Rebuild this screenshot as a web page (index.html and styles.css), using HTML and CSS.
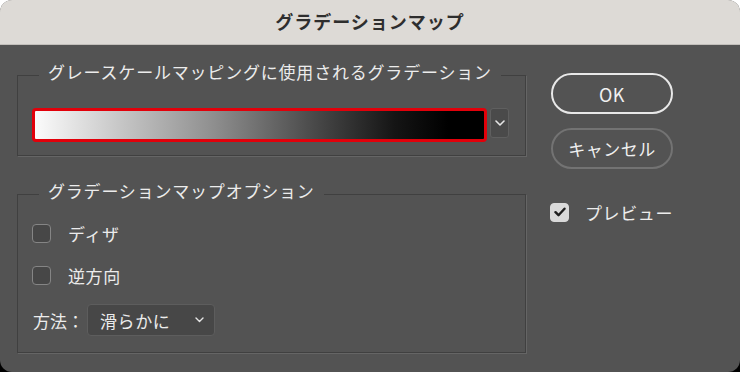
FILE: index.html
```html
<!DOCTYPE html>
<html lang="ja">
  <head>
    <meta charset="UTF-8" />
    <meta name="viewport" content="width=device-width, initial-scale=1.0" />
    <title>グラデーションマップ</title>
    <link rel="stylesheet" href="styles.css">
  </head>
  <body>
    <div class="dialog" role="dialog" aria-labelledby="dialog-title">
      <div class="titlebar">
        <h1 id="dialog-title" class="title">グラデーションマップ</h1>
      </div>

      <div class="dialog-body">
        <div class="main-col">
          <fieldset class="group group-gradient">
            <legend class="group-label">グレースケールマッピングに使用されるグラデーション</legend>
            <div class="gradient-row">
              <div class="gradient-bar" aria-label="グラデーション"></div>
              <button class="gradient-menu" aria-label="グラデーションを選択">
                <svg width="10" height="6" viewBox="0 0 10 6" aria-hidden="true">
                  <path d="M1 1l4 4 4-4" fill="none" stroke="#e6e6e6" stroke-width="1.6" stroke-linecap="round" stroke-linejoin="round" />
                </svg>
              </button>
            </div>
          </fieldset>

          <fieldset class="group group-options">
            <legend class="group-label">グラデーションマップオプション</legend>
            <label class="check-row">
              <span class="checkbox"></span>
              <span class="check-text">ディザ</span>
            </label>
            <label class="check-row">
              <span class="checkbox"></span>
              <span class="check-text">逆方向</span>
            </label>
            <div class="method-row">
              <span class="method-label">方法：</span>
              <div class="select">
                <span class="select-value">滑らかに</span>
                <svg width="9" height="6" viewBox="0 0 9 6" aria-hidden="true">
                  <path d="M1 1l3.5 3.5L8 1" fill="none" stroke="#e6e6e6" stroke-width="1.4" stroke-linecap="round" stroke-linejoin="round" />
                </svg>
              </div>
            </div>
          </fieldset>
        </div>

        <div class="side-col">
          <button class="btn btn-primary">OK</button>
          <button class="btn btn-secondary">キャンセル</button>
          <label class="check-row preview-row">
            <span class="checkbox checked">
              <svg width="12" height="10" viewBox="0 0 12 10" aria-hidden="true">
                <path d="M1.5 5.2l3 3 6-6.5" fill="none" stroke="#1e1e1e" stroke-width="2.4" stroke-linecap="round" stroke-linejoin="round" />
              </svg>
            </span>
            <span class="check-text">プレビュー</span>
          </label>
        </div>
      </div>
    </div>
  </body>
</html>
```

FILE: styles.css
```css
html {
  background: linear-gradient(#ffffff 50%, #000000 50%);
}

body {
  margin: 0;
  width: 740px;
  height: 372px;
  font-family: "Noto Sans CJK JP", "Noto Sans", sans-serif;
  color: #ececec;
}

.dialog {
  width: 740px;
  height: 372px;
  border-radius: 12px;
  overflow: hidden;
  background-color: #535353;
  display: flex;
  flex-direction: column;
}

.titlebar {
  height: 44px;
  background-color: #dddad6;
  border-bottom: 1px solid #c2bfbb;
  display: flex;
  justify-content: center;
  align-items: center;
}

.title {
  margin: 0;
  padding-bottom: 2px;
  font-size: 18px;
  font-weight: 700;
  letter-spacing: 1px;
  color: #2e2e2e;
}

.dialog-body {
  display: flex;
  gap: 24px;
  padding: 17px 0 0 17px;
}

.main-col {
  width: 509px;
  display: flex;
  flex-direction: column;
  gap: 25px;
}

.group {
  margin: 0;
  padding: 20px 14px 13px;
  border: 1px solid #404040;
  box-shadow: 1px 1px 0 #656565;
  min-width: 0;
}

.group-label {
  margin-left: 7px;
  padding: 0 9px 6px;
  font-size: 17px;
  line-height: 20px;
  letter-spacing: 0.8px;
  color: #ececec;
}

.gradient-row {
  display: flex;
  align-items: flex-start;
  gap: 3px;
}

.gradient-bar {
  width: 449px;
  height: 28px;
  border: 3px solid #e2000a;
  border-radius: 4px;
  background: linear-gradient(to right, #fbfbfb 0%, #c9c9c9 18%, #8e8e8e 40%, #4a4a4a 62%, #151515 80%, #000000 92%);
}

.gradient-menu {
  width: 19px;
  height: 30px;
  padding: 0;
  background-color: #4a4a4a;
  border: 1px solid #5f5f5f;
  border-radius: 3px;
  display: flex;
  align-items: center;
  justify-content: center;
}

.group-options {
  padding: 11px 14px 16px;
}

.check-row {
  display: flex;
  align-items: center;
  gap: 17px;
  height: 30px;
  font-size: 17px;
  letter-spacing: 0.6px;
}

.check-row + .check-row {
  margin-top: 12px;
}

.checkbox {
  width: 17px;
  height: 17px;
  border: 1px solid #858585;
  border-radius: 4px;
  background-color: #474747;
  display: flex;
  align-items: center;
  justify-content: center;
  flex-shrink: 0;
}

.checkbox.checked {
  background-color: #d9d9d9;
  border-color: #d9d9d9;
}

.method-row {
  margin-top: 14px;
  display: flex;
  align-items: center;
  height: 32px;
  padding-left: 1px;
  font-size: 17px;
}

.method-label {
  width: 54px;
}

.select {
  width: 104px;
  height: 30px;
  padding: 0 10px 0 12px;
  background-color: #474747;
  border: 1px solid #5d5d5d;
  border-radius: 4px;
  display: flex;
  align-items: center;
  justify-content: space-between;
  letter-spacing: 0.6px;
}

.side-col {
  display: flex;
  flex-direction: column;
  align-items: flex-start;
  padding-top: 11px;
}

.btn {
  width: 122px;
  height: 41px;
  border-radius: 21px;
  background: transparent;
  color: #f0f0f0;
  font-family: inherit;
  font-size: 17px;
  letter-spacing: 0.5px;
  margin-left: 1px;
}

.btn-primary {
  border: 2px solid #e8e8e8;
  font-size: 18px;
}

.btn-secondary {
  margin-top: 14px;
  border: 2px solid #737373;
}

.preview-row {
  margin-top: 28px;
  gap: 16px;
}
```
